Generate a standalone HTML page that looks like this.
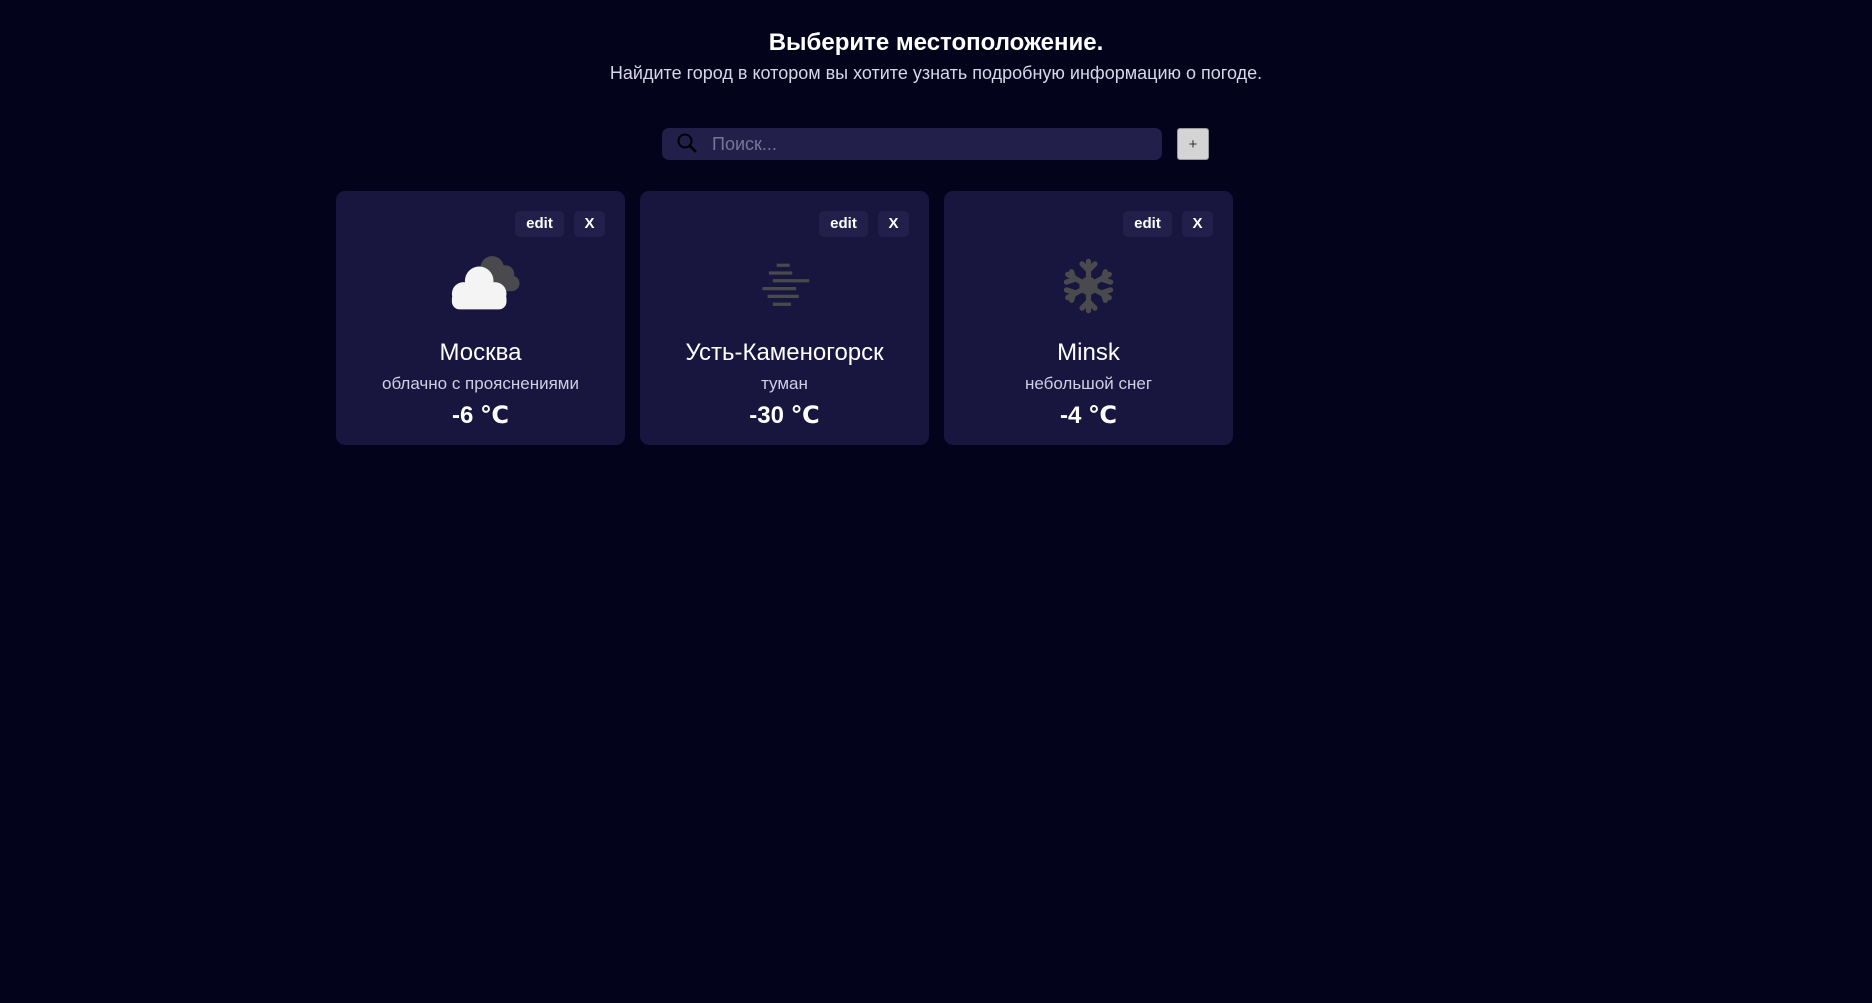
<!DOCTYPE html>
<html><head><meta charset="utf-8"><style>
*{box-sizing:border-box;margin:0;padding:0}
body{width:1872px;height:1003px;background:#03031b;font-family:"Liberation Sans","DejaVu Sans",sans-serif;color:#fff;position:relative;overflow:hidden}
h1{position:absolute;top:29px;left:0;width:1872px;text-align:center;font-size:24px;font-weight:bold}
.sub{position:absolute;top:63px;left:0;width:1872px;text-align:center;font-size:18px;color:#d8d6e8}
.search{position:absolute;left:662px;top:128px;width:500px;height:32px;background:#22204b;border-radius:7px}
.search span{position:absolute;left:50px;top:6px;font-size:18px;color:#77759a}
.plus{position:absolute;left:1177px;top:128px;width:32px;height:32px;background:#d4d4d4;border:1px solid #999;border-radius:3px;color:#333;font-size:15px;text-align:center;line-height:31px}
.card{position:absolute;top:191px;width:289px;height:254px;background:#18163f;border-radius:9px;text-align:center}
.btn{position:absolute;top:20px;height:26px;background:#22204b;border-radius:5px;font-weight:bold;font-size:15px;line-height:26px}
.e{left:179px;width:49px}.x{left:238px;width:31px}
.ic{position:absolute;left:99px;top:56px;width:91px;height:78px}
.name{position:absolute;top:148px;width:100%;font-size:24px}
.desc{position:absolute;top:183px;width:100%;font-size:17px;color:#d0cee2}
.t{position:absolute;top:210px;width:100%;font-size:24px;font-weight:bold}
</style></head><body>
<h1>Выберите местоположение.</h1>
<div class="sub">Найдите город в котором вы хотите узнать подробную информацию о погоде.</div>
<div class="search"><svg style="position:absolute;left:14px;top:4px" width="24" height="24" viewBox="0 0 24 24"><circle cx="9" cy="9" r="6.5" fill="none" stroke="#000" stroke-width="2"/><path d="M14 14l6 6" stroke="#000" stroke-width="2.5"/></svg><span>Поиск...</span></div>
<div class="plus">+</div>

<div class="card" style="left:336px"><div class="btn e">edit</div><div class="btn x">X</div>
<svg class="ic" viewBox="0 0 70 60"><g fill="#4a4a4e"><circle cx="44" cy="16" r="9"/><circle cx="54" cy="21" r="7"/><circle cx="59" cy="28" r="6"/><rect x="42" y="22" width="20" height="12" rx="5"/></g><g fill="#f4f4f4"><circle cx="34" cy="26" r="11"/><circle cx="22" cy="36" r="9"/><circle cx="46" cy="36" r="9"/><rect x="13" y="34" width="42" height="14" rx="6"/></g></svg>
<div class="name">Москва</div><div class="desc">облачно с прояснениями</div><div class="t">-6 ℃</div></div>

<div class="card" style="left:640px"><div class="btn e">edit</div><div class="btn x">X</div>
<svg class="ic" viewBox="0 0 70 60"><g stroke="#4a4a4e" stroke-width="2.5"><path d="M29 14h10M23 20h18M26 26h28M18 32h26M22 38h24M26 44h14"/></g></svg>
<div class="name">Усть-Каменогорск</div><div class="desc">туман</div><div class="t">-30 ℃</div></div>

<div class="card" style="left:944px"><div class="btn e">edit</div><div class="btn x">X</div>
<svg class="ic" viewBox="0 0 70 60"><g stroke="#4a4a4e" stroke-width="4" stroke-linecap="round" fill="none"><path d="M35 11v38M19 21l32 18M19 39l32-18"/><path d="M30 13l5 5 5-5M30 47l5-5 5 5M18 27l6-2-2-6M52 33l-6 2 2 6M18 33l6 2-2 6M52 27l-6-2 2-6"/></g><circle cx="35" cy="30" r="7" fill="#4a4a4e"/></svg>
<div class="name">Minsk</div><div class="desc">небольшой снег</div><div class="t">-4 ℃</div></div>
</body></html>
